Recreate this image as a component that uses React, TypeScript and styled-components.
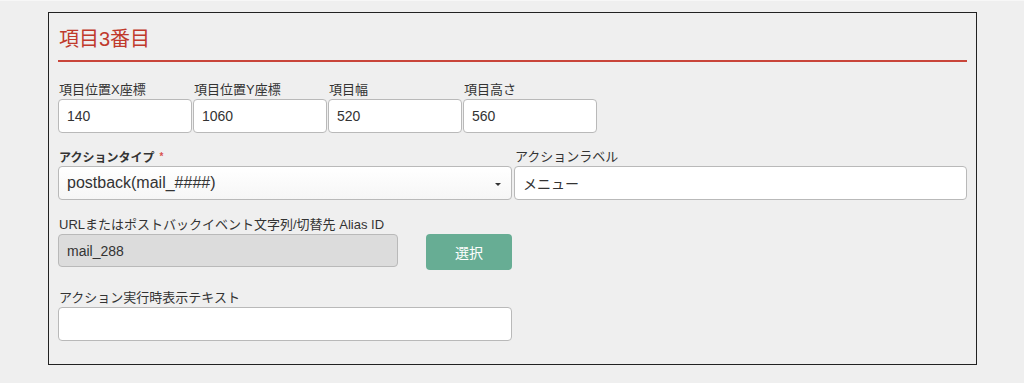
import styled, { createGlobalStyle } from 'styled-components';

const GlobalStyle = createGlobalStyle`
  html, body {
    margin: 0;
    padding: 0;
    background: #efefef;
  }
  body {
    border-top: 1px solid #f7f7f7;
    font-family: 'Liberation Sans', 'Noto Sans CJK JP', sans-serif;
    color: #333;
  }
`;

const Page = styled.div`
  padding: 11px 0 18px 48px;
`;

const Panel = styled.section`
  box-sizing: border-box;
  width: 929px;
  border: 1px solid #222;
  padding: 13px 9px 23px 9px;
`;

const Title = styled.h2`
  margin: 0 0 19px 0;
  padding: 1px 0 9px 1px;
  font-size: 20px;
  line-height: 24px;
  font-weight: normal;
  color: #c0392b;
  border-bottom: 2px solid #c9453a;
`;

interface RowProps {
  $gap?: number;
}

const PositionRow = styled.div<RowProps>`
  display: grid;
  grid-template-columns: repeat(4, 134px);
  column-gap: 1px;
  margin-bottom: ${({ $gap }) => $gap ?? 15}px;
`;

const HalfRow = styled.div<RowProps>`
  display: grid;
  grid-template-columns: 454px 453px;
  column-gap: 2px;
  margin-bottom: ${({ $gap }) => $gap ?? 0}px;
`;

const Field = styled.div`
  display: flex;
  flex-direction: column;
  min-width: 0;
`;

interface LabelProps {
  $bold?: boolean;
}

const Label = styled.label<LabelProps>`
  font-size: ${({ $bold }) => ($bold ? '12px' : '13px')};
  line-height: 18px;
  height: 18px;
  padding-left: 1px;
  font-weight: ${({ $bold }) => ($bold ? 'bold' : 'normal')};
  color: #333;
  white-space: nowrap;
`;

const Required = styled.span`
  color: #d9534f;
  font-size: 10px;
  margin-left: 5px;
  vertical-align: 2px;
`;

interface InputProps {
  $disabled?: boolean;
}

const Input = styled.input<InputProps>`
  box-sizing: border-box;
  width: 100%;
  height: 34px;
  margin: 0;
  padding: 0 8px;
  border: 1px solid #b9b9b9;
  border-radius: 4px;
  background: ${({ $disabled }) => ($disabled ? '#dcdcdc' : '#fff')};
  font-family: 'Liberation Sans', 'Noto Sans CJK JP', sans-serif;
  font-size: 14px;
  color: #333;
  outline: none;
`;

const SelectBox = styled.div`
  box-sizing: border-box;
  position: relative;
  height: 34px;
  padding: 0 24px 0 8px;
  display: flex;
  align-items: center;
  border: 1px solid #b9b9b9;
  border-radius: 4px;
  background: linear-gradient(#ffffff, #f6f6f6);
  font-size: 16px;
  color: #333;
`;

const Caret = styled.span`
  position: absolute;
  right: 10px;
  top: 16px;
  width: 0;
  height: 0;
  border-left: 3px solid transparent;
  border-right: 3px solid transparent;
  border-top: 3px solid #333;
`;

const AliasLine = styled.div`
  display: flex;
  align-items: flex-start;
  gap: 28px;
`;

const AliasInput = styled(Input)`
  width: 340px;
  height: 33px;
`;

const SelectButton = styled.button`
  box-sizing: border-box;
  width: 86px;
  height: 36px;
  border: none;
  border-radius: 4px;
  background: #67ad94;
  color: #fff;
  font-family: 'Liberation Sans', 'Noto Sans CJK JP', sans-serif;
  font-size: 14px;
  cursor: pointer;
`;

const positions = [
  { label: '項目位置X座標', value: '140' },
  { label: '項目位置Y座標', value: '1060' },
  { label: '項目幅', value: '520' },
  { label: '項目高さ', value: '560' },
];

export default function App() {
  return (
    <>
      <GlobalStyle />
      <Page>
        <Panel>
          <Title>項目3番目</Title>
          <PositionRow>
            {positions.map((item) => (
              <Field key={item.label}>
                <Label>{item.label}</Label>
                <Input readOnly value={item.value} />
              </Field>
            ))}
          </PositionRow>
          <HalfRow $gap={16}>
            <Field>
              <Label $bold>
                アクションタイプ<Required>*</Required>
              </Label>
              <SelectBox>
                postback(mail_####)
                <Caret />
              </SelectBox>
            </Field>
            <Field>
              <Label>アクションラベル</Label>
              <Input readOnly value="メニュー" />
            </Field>
          </HalfRow>
          <HalfRow $gap={19}>
            <Field>
              <Label>URLまたはポストバックイベント文字列/切替先 Alias ID</Label>
              <AliasLine>
                <AliasInput $disabled readOnly value="mail_288" />
                <SelectButton>選択</SelectButton>
              </AliasLine>
            </Field>
          </HalfRow>
          <HalfRow>
            <Field>
              <Label>アクション実行時表示テキスト</Label>
              <Input readOnly value="" />
            </Field>
          </HalfRow>
        </Panel>
      </Page>
    </>
  );
}
